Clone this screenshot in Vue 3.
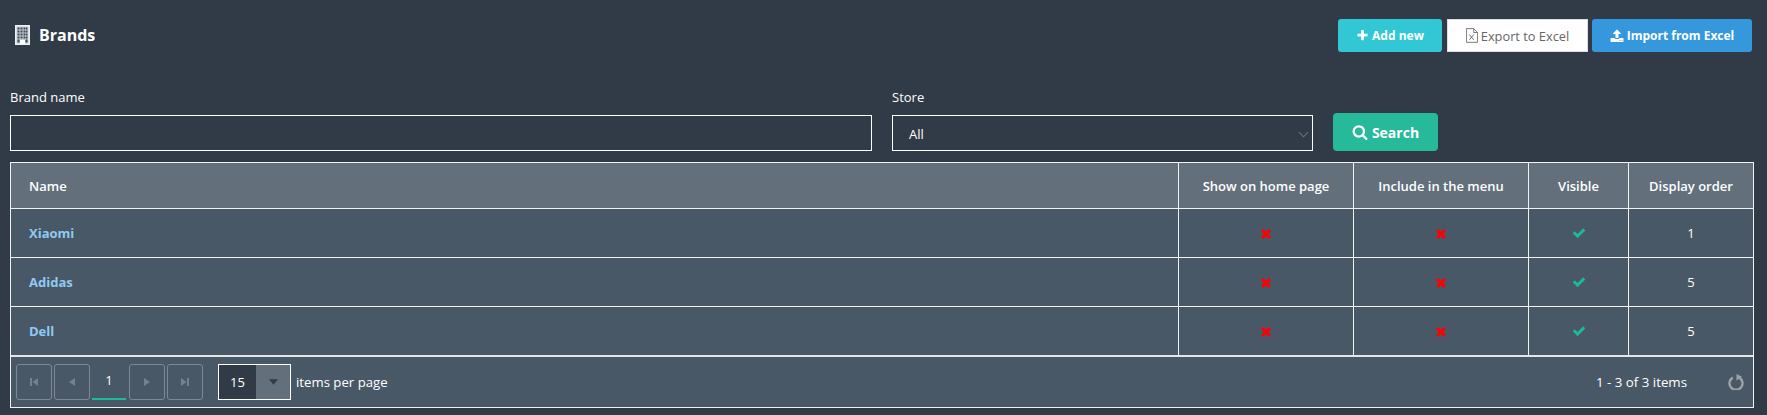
<script setup>
const rows = [
  { name: 'Xiaomi', order: 1 },
  { name: 'Adidas', order: 5 },
  { name: 'Dell', order: 5 },
]
const plus = 'M1600 736v192q0 40-28 68t-68 28h-416v416q0 40-28 68t-68 28h-192q-40 0-68-28t-28-68v-416h-416q-40 0-68-28t-28-68v-192q0-40 28-68t68-28h416v-416q0-40 28-68t68-28h192q40 0 68 28t28 68v416h416q40 0 68 28t28 68z'
const check = 'M1671 566q0 40-28 68l-724 724-136 136q-28 28-68 28t-68-28l-136-136-362-362q-28-28-28-68t28-68l136-136q28-28 68-28t68 28l294 295 656-657q28-28 68-28t68 28l136 136q28 28 28 68z'
const times = 'M1298 1322q0 40-28 68l-136 136q-28 28-68 28t-68-28l-294-294-294 294q-28 28-68 28t-68-28l-136-136q-28-28-28-68t28-68l294-294-294-294q-28-28-28-68t28-68l136-136q28-28 68-28t68 28l294 294 294-294q28-28 68-28t68 28l136 136q28 28 28 68t-28 68l-294 294 294 294q28 28 28 68z'
const search = 'M1216 832q0-185-131.5-316.5t-316.5-131.5-316.5 131.5-131.5 316.5 131.5 316.5 316.5 131.5 316.5-131.5 131.5-316.5zm512 832q0 52-38 90t-90 38q-54 0-90-38l-343-342q-179 124-399 124-143 0-273.5-55.5t-225-150-150-225-55.5-273.5 55.5-273.5 150-225 225-150 273.5-55.5 273.5 55.5 225 150 150 225 55.5 273.5q0 220-124 399l343 343q37 37 37 90z'
const upload = 'M1344 1472q0-26-19-45t-45-19-45 19-19 45 19 45 45 19 45-19 19-45zm256 0q0-26-19-45t-45-19-45 19-19 45 19 45 45 19 45-19 19-45zm128-224v320q0 40-28 68t-68 28h-1472q-40 0-68-28t-28-68v-320q0-40 28-68t68-28h427q21 56 70.5 92t110.5 36h256q61 0 110.5-36t70.5-92h427q40 0 68 28t28 68zm-325-648q-17 40-59 40h-256v448q0 26-19 45t-45 19h-256q-26 0-45-19t-19-45v-448h-256q-42 0-59-40-17-39 14-69l448-448q18-19 45-19t45 19l448 448q31 30 14 69z'
</script>

<template>
  <div class="page">
    <header class="top">
      <h1 class="title">
        <svg class="bldg" viewBox="0 0 15 20" width="15" height="20">
          <path fill="#eef1f4" d="M0 0h15v20H0z" />
          <path fill="#c4cbd1" d="M1.500 1.500h12v17h-12z" />
          <path fill="#3f4b58" d="M2.500 2.500h2v2h-2zM5.500 2.500h2v2h-2zM8.500 2.500h2v2h-2zM11 2.500h1.500v2H11zM2.500 5.500h2v2h-2zM5.500 5.500h2v2h-2zM8.500 5.500h2v2h-2zM11 5.500h1.500v2H11zM2.500 8.500h2v2h-2zM5.500 8.500h2v2h-2zM8.500 8.500h2v2h-2zM11 8.500h1.500v2H11zM2.500 11.500h2v2h-2zM5.500 11.500h2v2h-2zM8.500 11.500h2v2h-2zM11 11.500h1.500v2H11zM2.500 14.500h2v3h-2zM10.500 14.500h2v3h-2z" />
          <path fill="#fff" d="M5 15h5v4H5z" />
        </svg>
        <span>Brands</span>
      </h1>
      <div class="actions">
        <button class="btn add">
          <svg viewBox="0 0 1792 1792" width="13" height="13"><path fill="#fff" :d="plus" /></svg>Add new
        </button>
        <button class="btn export">
          <svg viewBox="0 0 14 17" width="12" height="15">
            <path fill="none" stroke="#666" d="M.5.5h8.500l4.500 4.500v11.500H.5zM9 .5v4.500h4.500" />
            <path fill="none" stroke="#555" d="M4 7.500l5 6M9 7.500l-5 6" />
          </svg>Export to Excel
        </button>
        <button class="btn import">
          <svg viewBox="0 0 1792 1792" width="14" height="14"><path fill="#fff" :d="upload" /></svg>Import from Excel
        </button>
      </div>
    </header>

    <section class="filters">
      <label class="field">
        <span class="lbl">Brand name</span>
        <input class="ctl" type="text" />
      </label>
      <label class="field">
        <span class="lbl">Store</span>
        <span class="ctl sel">
          <span>All</span>
          <svg viewBox="0 0 12 7" width="11" height="7"><path fill="none" stroke="#68727d" stroke-width="1.200" d="M1 1l5 5 5-5" /></svg>
        </span>
      </label>
      <button class="btn go">
        <svg viewBox="0 0 1792 1792" width="16" height="16"><path fill="#fff" :d="search" /></svg>Search
      </button>
    </section>

    <div class="grid">
      <table>
        <colgroup>
          <col class="c1" /><col class="c2" /><col class="c2" /><col class="c4" /><col class="c5" />
        </colgroup>
        <thead>
          <tr>
            <th class="left">Name</th>
            <th>Show on home page</th>
            <th>Include in the menu</th>
            <th>Visible</th>
            <th>Display order</th>
          </tr>
        </thead>
        <tbody>
          <tr v-for="r in rows" :key="r.name">
            <td class="left"><a class="link">{{ r.name }}</a></td>
            <td><svg class="ic" viewBox="100 200 1208 1400" width="10" height="11"><path fill="#f00" :d="times" /></svg></td>
            <td><svg class="ic" viewBox="100 200 1208 1400" width="10" height="11"><path fill="#f00" :d="times" /></svg></td>
            <td><svg class="ic" viewBox="0 0 1792 1792" width="14" height="14"><path fill="#1abb9c" :d="check" /></svg></td>
            <td>{{ r.order }}</td>
          </tr>
        </tbody>
      </table>
      <footer class="pager">
        <button class="pg"><svg viewBox="0 0 10 10" width="10" height="10"><path fill="#75818c" d="M1 1h2v8H1zM9 1v8L3.500 5z" /></svg></button>
        <button class="pg"><svg viewBox="0 0 10 10" width="10" height="10"><path fill="#75818c" d="M8 1v8L2 5z" /></svg></button>
        <span class="cur">1</span>
        <button class="pg"><svg viewBox="0 0 10 10" width="10" height="10"><path fill="#75818c" d="M2 1v8l6-4z" /></svg></button>
        <button class="pg"><svg viewBox="0 0 10 10" width="10" height="10"><path fill="#75818c" d="M7 1h2v8H7zM1 1v8l5.500-4z" /></svg></button>
        <span class="size">
          <span class="num">15</span>
          <span class="drop"><svg viewBox="0 0 10 6" width="9" height="6"><path fill="#2f3b48" d="M0 0h10L5 6z" /></svg></span>
        </span>
        <span class="per">items per page</span>
        <span class="count">1 - 3 of 3 items</span>
        <svg class="reload" viewBox="0 0 16 16" width="16" height="16">
          <path fill="none" stroke="#9aa3ac" stroke-width="2.400" d="M4.800 3.600A6.500 6.500 0 1 0 11.200 3.600" />
          <path fill="#9aa3ac" d="M8.500 0v6.500L14 2.800z" />
        </svg>
      </footer>
    </div>
  </div>
</template>

<style>
html, body { margin: 0; background: #303b47; }
</style>

<style scoped>
.page {
  box-sizing: border-box;
  height: 415px;
  padding: 19px 13px 0 10px;
  background: #303b47;
  color: #fff;
  font-family: "Open Sans", sans-serif;
  font-size: 13px;
  overflow: hidden;
}
.top {
  display: flex;
  justify-content: space-between;
  align-items: flex-start;
  height: 69px;
  padding-right: 2px;
}
.title {
  display: flex;
  align-items: center;
  gap: 9px;
  margin: 6px 0 0 5px;
  font-size: 16px;
  font-weight: 700;
  line-height: 20px;
}
.bldg { display: block; }
.actions { display: flex; }
.btn {
  display: inline-flex;
  align-items: center;
  justify-content: center;
  gap: 3px;
  box-sizing: border-box;
  height: 33px;
  padding: 0;
  border: 0;
  border-radius: 3px;
  color: #fff;
  font-family: inherit;
  font-size: 12px;
  font-weight: 700;
}
.add { width: 104px; background: #31c7d5; }
.export {
  width: 141px;
  margin-left: 5px;
  background: #fff;
  border: 1px solid #d9dee3;
  border-radius: 0;
  color: #666;
  font-size: 12.800px;
  font-weight: 400;
}
.import { width: 160px; margin-left: 4px; background: #3598dc; }
.filters {
  display: grid;
  grid-template-columns: 862px 421px auto;
  column-gap: 20px;
  justify-content: start;
  align-items: end;
}
.field { display: block; }
.lbl { display: block; height: 18px; margin-bottom: 9px; line-height: 18px; }
.ctl {
  display: block;
  box-sizing: border-box;
  width: 100%;
  height: 36px;
  margin: 0;
  padding: 0;
  border: 1px solid #fff;
  border-radius: 0;
  outline: 0;
  background: transparent;
  color: #fff;
  font: inherit;
}
.sel {
  display: flex;
  align-items: center;
  justify-content: space-between;
  padding: 2px 3px 0 16px;
}
.go {
  width: 105px;
  height: 38px;
  gap: 4px;
  background: #26b99a;
  font-size: 14px;
  border-radius: 4px;
}
.grid {
  box-sizing: border-box;
  width: 1744px;
  margin-top: 11px;
  border: 1px solid #f0f2f4;
  background: #495866;
}
table {
  width: 1742px;
  table-layout: fixed;
  border-collapse: separate;
  border-spacing: 0;
}
.c1 { width: 1167px; }
.c2 { width: 175px; }
.c4 { width: 100px; }
.c5 { width: 125px; }
th, td {
  box-sizing: border-box;
  padding: 0;
  border-left: 1px solid #f0f2f4;
  border-bottom: 1px solid #f0f2f4;
  text-align: center;
  font-size: 13px;
}
th { height: 46px; background: #63707c; font-weight: 600; }
td { height: 49px; }
tbody tr:last-child td { height: 50px; border-bottom-width: 2px; border-bottom-color: #e6e6e6; }
.left { border-left: 0; padding-left: 18px; text-align: left; }
.link { color: #90caf3; font-weight: 700; }
.ic { display: block; margin: 0 auto; }
.pager {
  display: flex;
  align-items: center;
  height: 50px;
  padding: 0 9px 0 5px;
  box-sizing: border-box;
}
.pg {
  display: flex;
  align-items: center;
  justify-content: center;
  box-sizing: border-box;
  width: 36px;
  height: 36px;
  margin-right: 2px;
  padding: 0;
  border: 1px solid #7d8893;
  border-radius: 3px;
  background: transparent;
}
.cur {
  box-sizing: border-box;
  width: 34px;
  height: 36px;
  margin: 0 3px 0 0;
  border-bottom: 2px solid #1abb9c;
  text-align: center;
  line-height: 32px;
}
.size {
  display: flex;
  box-sizing: border-box;
  width: 73px;
  height: 36px;
  margin-left: 13px;
  border: 1px solid #fff;
}
.num {
  display: flex;
  align-items: center;
  justify-content: center;
  width: 37px;
  background: #303b47;
  font-size: 13px;
}
.drop {
  display: flex;
  flex: 1;
  align-items: center;
  justify-content: center;
  background: #63707c;
}
.per { margin-left: 5px; font-size: 13.200px; }
.count { margin-left: auto; margin-right: 41px; font-size: 13.300px; }
.reload { display: block; }
</style>
